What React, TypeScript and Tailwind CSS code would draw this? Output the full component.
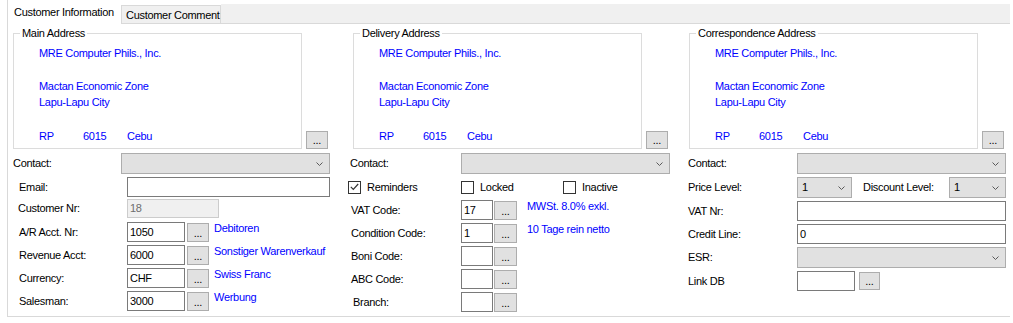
const Chevron = () => (
  <svg width="7" height="4" viewBox="0 0 7 4" className="shrink-0">
    <polyline points="0.5,0.5 3.5,3.5 6.5,0.5" fill="none" stroke="#5a5a5a" strokeWidth="1" />
  </svg>
);

const Dots = ({ className }: { className: string }) => (
  <div className={"flex items-end justify-center border border-[#adadad] bg-[#e1e1e1] pb-[2px] leading-none " + className}>
    ...
  </div>
);

const Combo = ({ className, value = "" }: { className: string; value?: string }) => (
  <div className={"flex items-center justify-between border border-[#adadad] bg-[#e1e1e1] pl-[4px] pr-[6px] " + className}>
    <span>{value}</span>
    <Chevron />
  </div>
);

const Input = ({ className, value = "" }: { className: string; value?: string }) => (
  <div className={"flex items-center border border-[#7a7a7a] bg-white pl-[2px] " + className}>{value}</div>
);

const Check = ({ checked }: { checked?: boolean }) => (
  <div className="flex h-[13px] w-[13px] shrink-0 items-center justify-center border border-[#333333] bg-white">
    {checked && (
      <svg width="9" height="8" viewBox="0 0 9 8">
        <polyline points="0.8,3.8 3.3,6.3 8.2,1" fill="none" stroke="#333333" strokeWidth="1.2" />
      </svg>
    )}
  </div>
);

const AddressGroup = ({ title }: { title: string }) => (
  <div className="ml-[5px] mt-[3px] flex items-end">
    <fieldset className="h-[122px] w-[289px] shrink-0 border border-[#dcdcdc]">
      <legend className="ml-[6px] px-[2px] leading-[13px]">{title}</legend>
      <div className="pl-[25px] pt-[7px] leading-[13px] text-[#0000ff]">
        <div>MRE Computer Phils., Inc.</div>
        <div className="mt-[20px]">Mactan Economic Zone</div>
        <div className="mt-[3px]">Lapu-Lapu City</div>
        <div className="mt-[21px] flex">
          <span className="w-[44px]">RP</span>
          <span className="w-[44px]">6015</span>
          <span>Cebu</span>
        </div>
      </div>
    </fieldset>
    <Dots className="ml-[4px] h-[18px] w-[22px] shrink-0" />
  </div>
);

// label column, then controls
const Row = ({ className, label, labelClass, children }: { className: string; label: string; labelClass: string; children?: React.ReactNode }) => (
  <div className={"flex " + className}>
    <div className={"flex shrink-0 items-center " + labelClass}>{label}</div>
    {children}
  </div>
);

const AcctRow = ({ label, value, text, className }: { label: string; value: string; text: string; className: string }) => (
  <Row className={"h-[20px] " + className} label={label} labelClass="w-[119px] pl-[11px]">
    <Input className="h-[20px] w-[58px]" value={value} />
    <Dots className="ml-[2px] mt-[1px] h-[19px] w-[22px]" />
    <div className="ml-[5px] leading-[13px] text-[#0000ff]">{text}</div>
  </Row>
);

const CodeRow = ({ label, value = "", text, className, labelClass = "w-[113px] pl-[3px]" }: { label: string; value?: string; text?: string; className: string; labelClass?: string }) => (
  <Row className={"h-[20px] " + className} label={label} labelClass={labelClass}>
    <Input className="h-[20px] w-[32px]" value={value} />
    <Dots className="ml-[1px] mt-[1px] h-[19px] w-[23px]" />
    {text && <div className="ml-[10px] leading-[13px] text-[#0000ff]">{text}</div>}
  </Row>
);

const App = () => {
  return (
    <div className="h-[323px] w-[1013px] overflow-hidden whitespace-nowrap bg-white font-['Liberation_Sans',Arial,sans-serif] text-[11px] tracking-[-0.3px] text-black">
      <div className="ml-[7px] flex h-[24px] w-[1003px]">
        <div className="w-[114px] shrink-0 border-l border-[#d9d9d9] pl-[6px] pt-[6px] leading-[13px]">Customer Information</div>
        <div className="mt-[5px] w-[100px] shrink-0 border border-[#d9d9d9] bg-[#f0f0f0] pl-[4px] pt-[3px] leading-[13px]">Customer Comment</div>
        <div className="mt-[4px] flex-1 border-b border-[#d9d9d9] bg-[#f0f0f0]" />
      </div>

      <div className="ml-[7px] flex h-[293px] w-[1003px] border-b border-l border-[#d9d9d9]">
        <div className="flex w-[340px] shrink-0 flex-col">
          <AddressGroup title="Main Address" />
          <Row className="mt-[4px] h-[21px]" label="Contact:" labelClass="w-[113px] pl-[5px]">
            <Combo className="h-[21px] w-[209px]" />
          </Row>
          <Row className="mt-[3px] h-[20px]" label="Email:" labelClass="w-[119px] pl-[11px]">
            <Input className="h-[20px] w-[203px]" />
          </Row>
          <Row className="mt-[2px] h-[19px]" label="Customer Nr:" labelClass="w-[119px] pl-[10px]">
            <div className="flex h-[19px] w-[92px] items-center border border-[#cccccc] bg-[#f0f0f0] pl-[2px] text-[#6d6d6d]">18</div>
          </Row>
          <AcctRow className="mt-[4px]" label="A/R Acct. Nr:" value="1050" text="Debitoren" />
          <AcctRow className="mt-[3px]" label="Revenue Acct:" value="6000" text="Sonstiger Warenverkauf" />
          <AcctRow className="mt-[3px]" label="Currency:" value="CHF" text="Swiss Franc" />
          <AcctRow className="mt-[3px]" label="Salesman:" value="3000" text="Werbung" />
        </div>

        <div className="flex w-[336px] shrink-0 flex-col">
          <AddressGroup title="Delivery Address" />
          <Row className="mt-[4px] h-[21px]" label="Contact:" labelClass="w-[113px] pl-[2px]">
            <Combo className="h-[21px] w-[209px]" />
          </Row>
          <div className="mt-[3px] flex h-[20px] items-center">
            <div className="flex w-[113px] items-center">
              <Check checked />
              <span className="ml-[6px]">Reminders</span>
            </div>
            <div className="flex w-[102px] items-center">
              <Check />
              <span className="ml-[6px]">Locked</span>
            </div>
            <div className="flex items-center">
              <Check />
              <span className="ml-[6px]">Inactive</span>
            </div>
          </div>
          <CodeRow className="mt-[3px]" label="VAT Code:" value="17" text="MWSt. 8.0% exkl." />
          <CodeRow className="mt-[3px]" label="Condition Code:" value="1" text="10 Tage rein netto" />
          <CodeRow className="mt-[3px]" label="Boni Code:" />
          <CodeRow className="mt-[3px]" label="ABC Code:" />
          <CodeRow className="mt-[3px]" label="Branch:" labelClass="w-[113px] pl-[5px]" />
        </div>

        <div className="flex flex-1 flex-col">
          <AddressGroup title="Correspondence Address" />
          <Row className="mt-[4px] h-[21px]" label="Contact:" labelClass="w-[113px] pl-[4px]">
            <Combo className="h-[21px] w-[209px]" />
          </Row>
          <Row className="mt-[3px] h-[21px]" label="Price Level:" labelClass="w-[113px] pl-[4px]">
            <Combo className="h-[21px] w-[55px]" value="1" />
            <div className="ml-[11px] flex w-[86px] items-center">Discount Level:</div>
            <Combo className="h-[21px] w-[57px]" value="1" />
          </Row>
          <Row className="mt-[3px] h-[20px]" label="VAT Nr:" labelClass="w-[113px] pl-[4px]">
            <Input className="h-[20px] w-[209px]" />
          </Row>
          <Row className="mt-[3px] h-[20px]" label="Credit Line:" labelClass="w-[113px] pl-[4px]">
            <Input className="h-[20px] w-[209px]" value="0" />
          </Row>
          <Row className="mt-[3px] h-[21px]" label="ESR:" labelClass="w-[113px] pl-[4px]">
            <Combo className="h-[21px] w-[209px]" />
          </Row>
          <Row className="mt-[3px] h-[20px]" label="Link DB" labelClass="w-[113px] pl-[4px]">
            <Input className="h-[20px] w-[58px]" />
            <Dots className="ml-[4px] mt-[1px] h-[18px] w-[21px]" />
          </Row>
        </div>
      </div>
    </div>
  );
};

export default App;
